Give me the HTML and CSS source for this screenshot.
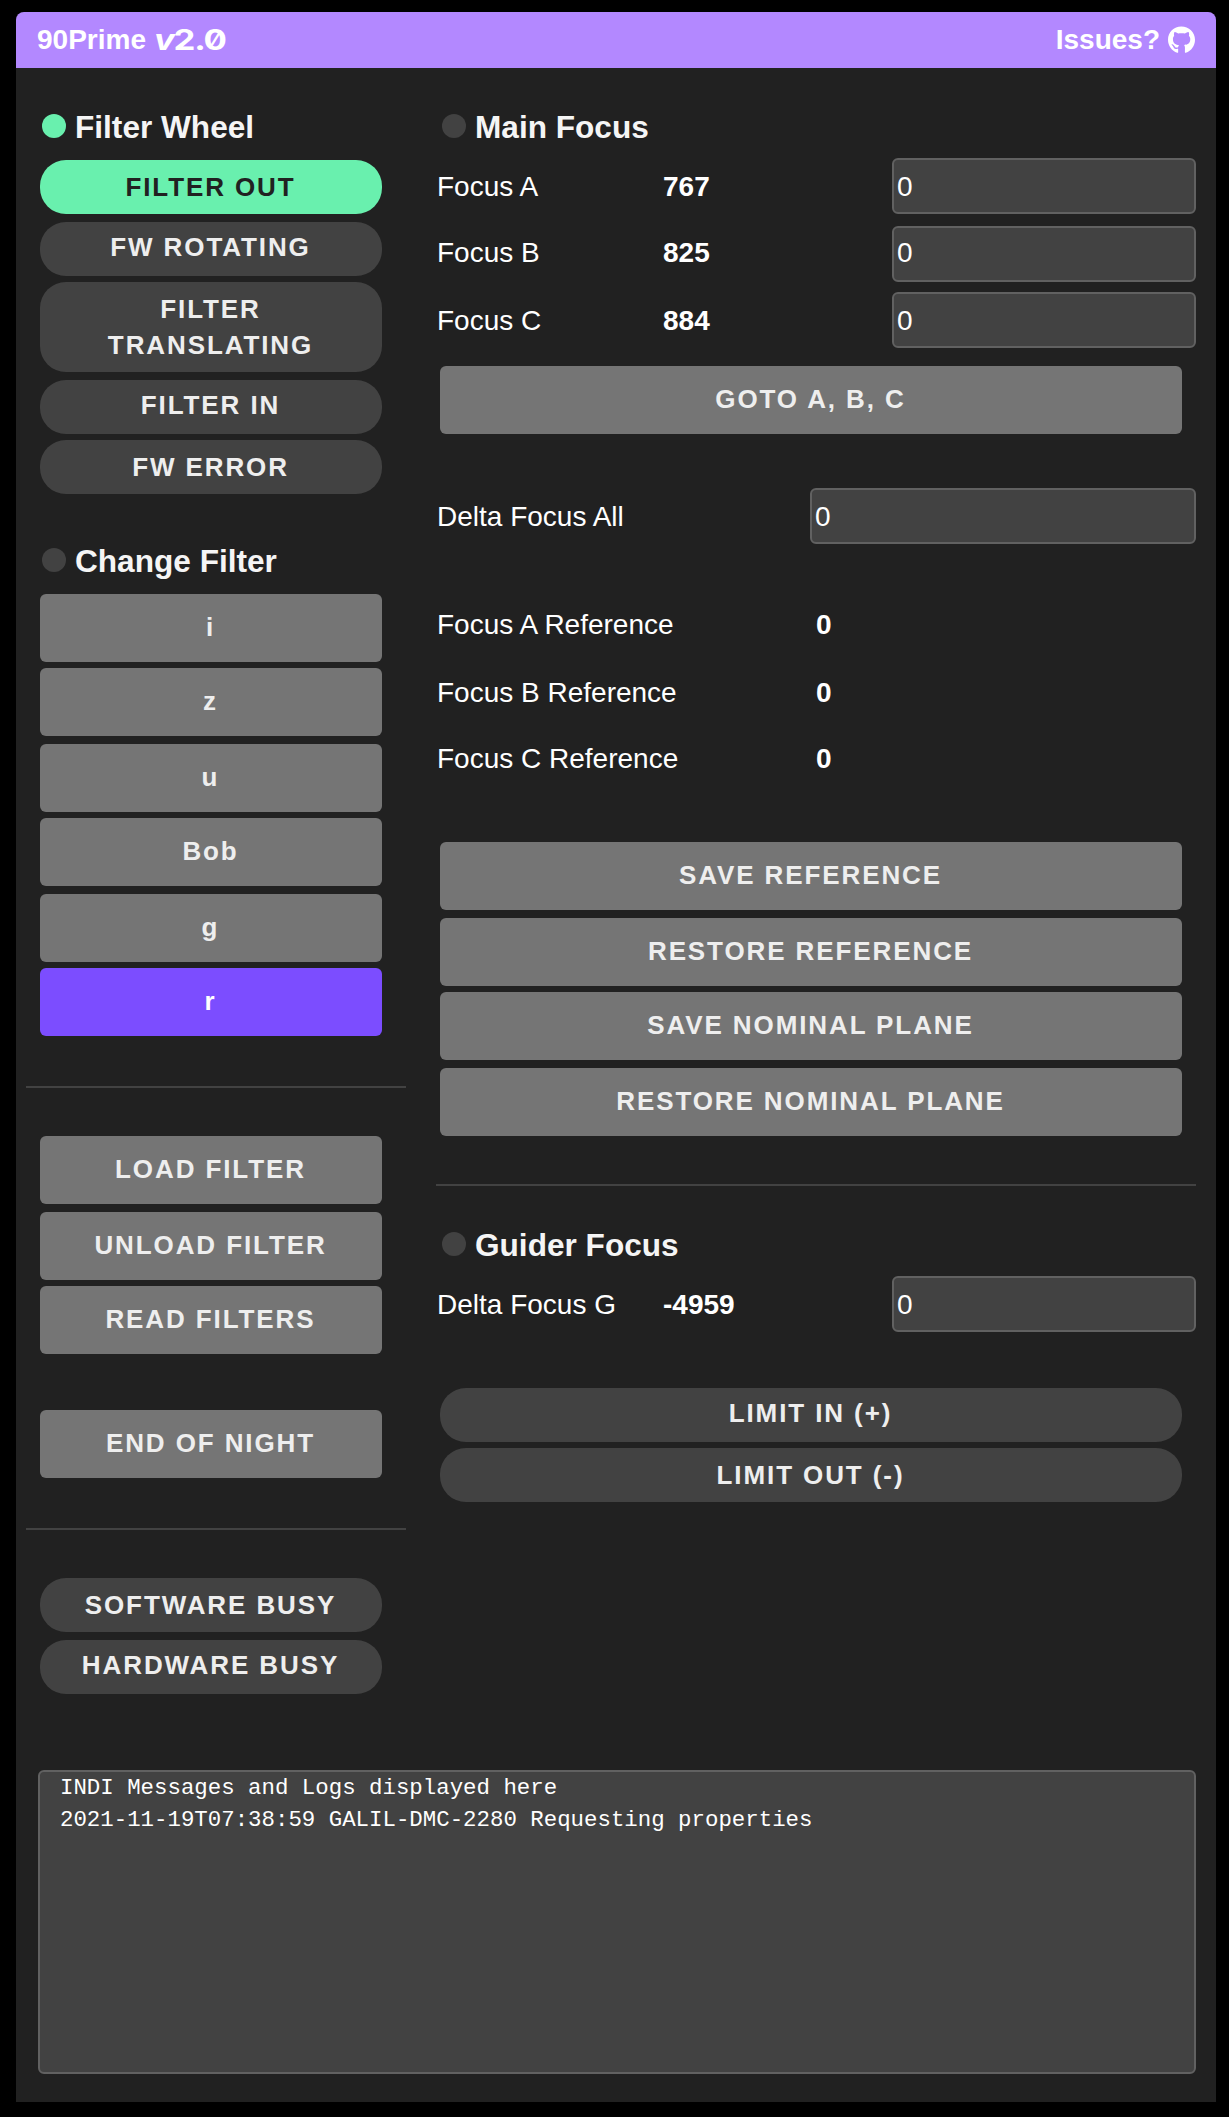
FILE: index.html
```html
<!DOCTYPE html>
<html lang="en">
<head>
<meta charset="utf-8">
<title>90Prime v2.0</title>
<link rel="stylesheet" href="styles.css">
</head>
<body>
<div class="panel">
  <header class="topbar">
    <div class="brand">90Prime <span class="version"><i>v</i>2.0</span></div>
    <a class="issues">Issues?
      <svg class="github" viewBox="0 0 496 512" aria-hidden="true"><path fill="currentColor" d="M165.9 397.4c0 2-2.3 3.6-5.2 3.6-3.3.3-5.6-1.3-5.6-3.6 0-2 2.3-3.6 5.2-3.6 3-.3 5.6 1.3 5.6 3.6zm-31.1-4.5c-.7 2 1.3 4.3 4.3 4.9 2.6 1 5.6 0 6.2-2s-1.3-4.3-4.3-5.2c-2.6-.7-5.5.3-6.2 2.3zm44.2-1.7c-2.9.7-4.9 2.6-4.6 4.9.3 2 2.9 3.3 5.9 2.6 2.9-.7 4.9-2.6 4.6-4.6-.3-1.9-3-3.2-5.9-2.9zM244.8 8C106.1 8 0 113.3 0 252c0 110.9 69.8 205.8 169.5 239.2 12.8 2.3 17.3-5.6 17.3-12.1 0-6.2-.3-40.4-.3-61.4 0 0-70 15-84.7-29.8 0 0-11.4-29.1-27.8-36.6 0 0-22.9-15.7 1.6-15.4 0 0 24.9 2 38.6 25.8 21.9 38.6 58.6 27.5 72.9 20.9 2.3-16 8.8-27.1 16-33.7-55.9-6.2-112.3-14.3-112.3-110.5 0-27.5 7.6-41.3 23.6-58.9-2.6-6.5-11.1-33.3 2.6-67.9 20.9-6.5 69 27 69 27 20-5.6 41.5-8.5 62.8-8.5s42.8 2.9 62.8 8.5c0 0 48.1-33.6 69-27 13.7 34.7 5.2 61.4 2.6 67.9 16 17.7 25.8 31.5 25.8 58.9 0 96.5-58.9 104.2-114.8 110.5 9.2 7.9 17 22.9 17 46.4 0 33.7-.3 75.4-.3 83.6 0 6.5 4.6 14.4 17.3 12.1C428.2 457.8 496 362.9 496 252 496 113.3 383.5 8 244.8 8z"/></svg>
    </a>
  </header>

  <main class="columns">
    <section class="filters">
      <h3 class="heading"><span class="dot on"></span>Filter Wheel</h3>
      <div class="stack">
        <div class="pill on">Filter Out</div>
        <div class="pill raised wide-gap">FW Rotating</div>
        <div class="pill tall">Filter Translating</div>
        <div class="pill raised wide-gap">Filter In</div>
        <div class="pill">FW Error</div>
      </div>

      <h3 class="heading second"><span class="dot"></span>Change Filter</h3>
      <div class="stack names">
        <button class="btn">i</button>
        <button class="btn">z</button>
        <button class="btn wide-gap">u</button>
        <button class="btn">Bob</button>
        <button class="btn wide-gap">g</button>
        <button class="btn active">r</button>
      </div>
      <hr class="rule">
      <div class="stack">
        <button class="btn">Load Filter</button>
        <button class="btn wide-gap">Unload Filter</button>
        <button class="btn">Read Filters</button>
      </div>
      <div class="stack night">
        <button class="btn">End of Night</button>
      </div>
      <hr class="rule">
      <div class="stack">
        <div class="pill">Software Busy</div>
        <div class="pill raised wide-gap">Hardware Busy</div>
      </div>
    </section>

    <section class="focus">
      <h3 class="heading"><span class="dot"></span>Main Focus</h3>
      <div class="row spaced"><label>Focus A</label><b>767</b><input value="0"></div>
      <div class="row lifted"><label>Focus B</label><b>825</b><input value="0"></div>
      <div class="row"><label>Focus C</label><b>884</b><input value="0"></div>
      <div class="stack goto">
        <button class="btn">Goto A, B, C</button>
      </div>
      <div class="row delta"><label>Delta Focus All</label><input value="0"></div>
      <div class="references">
        <div class="row reference spaced"><label>Focus A Reference</label><b>0</b></div>
        <div class="row reference"><label>Focus B Reference</label><b>0</b></div>
        <div class="row reference"><label>Focus C Reference</label><b>0</b></div>
      </div>
      <div class="stack">
        <button class="btn">Save Reference</button>
        <button class="btn wide-gap">Restore Reference</button>
        <button class="btn">Save Nominal Plane</button>
        <button class="btn wide-gap">Restore Nominal Plane</button>
      </div>
      <hr class="rule">
      <h3 class="heading"><span class="dot"></span>Guider Focus</h3>
      <div class="row"><label>Delta Focus G</label><b>-4959</b><input value="0"></div>
      <div class="stack limits">
        <div class="pill raised">Limit In (+)</div>
        <div class="pill">Limit Out (-)</div>
      </div>
    </section>
  </main>

  <div class="log">
    <div>INDI Messages and Logs displayed here</div>
    <div>2021-11-19T07:38:59 GALIL-DMC-2280 Requesting properties</div>
  </div>
</div>
</body>
</html>
```
FILE: styles.css
```css
* {
  box-sizing: border-box;
}

body {
  margin: 0;
  padding: 12px 13px 15px 16px;
  background: #000;
  color: #fff;
  font: 28px/56px "Liberation Sans", Helvetica, Arial, sans-serif;
}

.panel {
  height: 2090px;
  background: #212121;
  border-radius: 8px 8px 0 0;
}

.topbar {
  display: flex;
  justify-content: space-between;
  height: 56px;
  padding: 0 21px;
  background: #b388ff;
  border-radius: 8px 8px 0 0;
  font-weight: bold;
}

.brand,
.issues {
  display: flex;
  align-items: center;
  white-space: pre;
}

.version {
  display: inline-block;
  font: 700 28px/56px Inter, sans-serif;
  font-feature-settings: "zero";
  letter-spacing: -1px;
  transform: scaleX(1.24);
  transform-origin: left;
}

.github {
  width: 27px;
  height: 28px;
  margin-left: 8px;
}

.issues {
  white-space: normal;
}

.columns {
  display: grid;
  grid-template-columns: 380px 760px;
  column-gap: 30px;
  padding: 40px 20px 0 10px;
}

.heading {
  display: flex;
  align-items: center;
  height: 38px;
  margin: 0 0 14px;
  padding-left: 16px;
  color: #f5f5f5;
  font-size: 31.6px;
  line-height: 38px;
}

.heading.second {
  margin-top: 48px;
}

.focus .heading {
  margin-bottom: 12px;
  padding-left: 6px;
}

.dot {
  width: 24px;
  height: 24px;
  margin: 0 9px 2px 0;
  border-radius: 50%;
  background: #424242;
}

.stack {
  display: flex;
  flex-direction: column;
  gap: 6px;
  padding: 0 24px 0 14px;
  color: #eee;
  font-size: 26px;
  font-weight: bold;
  letter-spacing: 1.9px;
  line-height: 36px;
  text-align: center;
  text-transform: uppercase;
}

.names {
  text-transform: none;
}

.focus .stack {
  padding: 0 14px 0 4px;
}

.wide-gap {
  margin-top: 2px;
}

.pill {
  height: 54px;
  padding: 9px 41px 9px 40px;
  border-radius: 26px;
  background: #424242;
}

.pill.raised {
  padding-top: 7px;
}

.pill.tall {
  height: 90px;
}

.on {
  background: #69f0ae;
  color: #212121;
}

.btn {
  height: 68px;
  padding: 0 1px 2px 0;
  border: 0;
  border-radius: 6px;
  background: #757575;
  color: inherit;
  font: inherit;
  letter-spacing: inherit;
  text-transform: inherit;
}

.btn.active {
  background: #7c4dff;
  color: #fff;
}

.rule {
  height: 2px;
  margin: 50px 0 48px;
  border: 0;
  background: #424242;
}

.focus .rule {
  margin: 48px 0 40px;
}

.night {
  margin-top: 56px;
}

.row {
  display: grid;
  grid-template-columns: 228px 228px 304px;
  height: 56px;
  margin-bottom: 10px;
  line-height: 57px;
}

.row.spaced {
  margin-bottom: 12px;
}

.row label {
  padding-left: 1px;
}

.row b {
  margin-left: -1px;
}

.lifted label,
.lifted b {
  line-height: 54px;
}

.row input {
  width: 100%;
  height: 56px;
  padding: 1px 3px 0;
  border: 2px solid #616161;
  border-radius: 6px;
  background: #424242;
  color: #fff;
  font: inherit;
  line-height: normal;
}

.lifted input {
  padding: 0 3px 3px;
}

.goto {
  margin: 18px 0 54px;
}

.row.delta {
  grid-template-columns: 374px 386px;
}

.references {
  margin: 52px 0 56px;
}

.row.reference {
  grid-template-columns: 381px 379px;
}

.row.reference:last-child {
  margin-bottom: 0;
}

.limits {
  margin-top: 56px;
}

.log {
  height: 304px;
  margin: 76px 20px 0 22px;
  padding-left: 20px;
  border: 2px solid #616161;
  border-radius: 6px;
  background: #424242;
  font: 22.4px/32px "Liberation Mono", "Courier New", monospace;
}
```
